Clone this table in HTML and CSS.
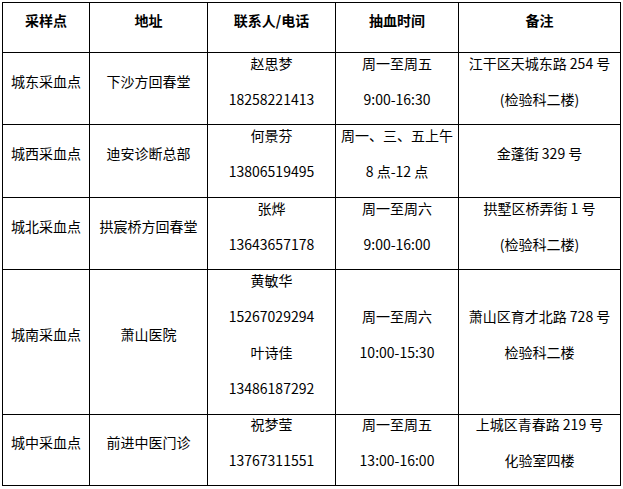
FILE: index.html
```html
<!DOCTYPE html>
<html lang="zh-CN">
<head>
<meta charset="utf-8">
<title>采血点</title>
<link rel="stylesheet" href="styles.css">
</head>
<body>
<table class="grid">
  <colgroup>
    <col class="c1"><col class="c2"><col class="c3"><col class="c4"><col class="c5">
  </colgroup>
  <thead>
    <tr class="rh">
      <th><p>采样点</p></th>
      <th><p>地址</p></th>
      <th><p>联系人/电话</p></th>
      <th><p>抽血时间</p></th>
      <th><p>备注</p></th>
    </tr>
  </thead>
  <tbody>
    <tr class="r1">
      <td><p>城东采血点</p></td>
      <td><p>下沙方回春堂</p></td>
      <td><p>赵思梦</p><p>18258221413</p></td>
      <td><p>周一至周五</p><p>9:00-16:30</p></td>
      <td><p>江干区天城东路 254 号</p><p>(检验科二楼)</p></td>
    </tr>
    <tr class="r2">
      <td><p>城西采血点</p></td>
      <td><p>迪安诊断总部</p></td>
      <td><p>何景芬</p><p>13806519495</p></td>
      <td><p>周一、三、五上午</p><p>8 点-12 点</p></td>
      <td><p>金蓬街 329 号</p></td>
    </tr>
    <tr class="r3">
      <td><p>城北采血点</p></td>
      <td><p>拱宸桥方回春堂</p></td>
      <td><p>张烨</p><p>13643657178</p></td>
      <td><p>周一至周六</p><p>9:00-16:00</p></td>
      <td><p>拱墅区桥弄街 1 号</p><p>(检验科二楼)</p></td>
    </tr>
    <tr class="r4">
      <td><p>城南采血点</p></td>
      <td><p>萧山医院</p></td>
      <td><p>黄敏华</p><p>15267029294</p><p>叶诗佳</p><p>13486187292</p></td>
      <td><p>周一至周六</p><p>10:00-15:30</p></td>
      <td><p>萧山区育才北路 728 号</p><p>检验科二楼</p></td>
    </tr>
    <tr class="r5">
      <td><p>城中采血点</p></td>
      <td><p>前进中医门诊</p></td>
      <td><p>祝梦莹</p><p>13767311551</p></td>
      <td><p>周一至周五</p><p>13:00-16:00</p></td>
      <td><p>上城区青春路 219 号</p><p>化验室四楼</p></td>
    </tr>
  </tbody>
</table>
</body>
</html>
```

FILE: styles.css
```css
html, body {
  background: #ffffff;
}
body {
  margin: 2px;
  font-family: "Noto Sans CJK SC", "Noto Sans", sans-serif;
  font-size: 14px;
  color: #000000;
}
.grid {
  border-collapse: collapse;
  table-layout: fixed;
  width: 618px;
}
.grid th,
.grid td {
  border: 1px solid #000000;
  padding: 0;
  text-align: center;
  vertical-align: middle;
  white-space: nowrap;
}
.grid th {
  font-weight: bold;
}
.grid p {
  margin: 0 0 18px 0;
  line-height: 18px;
}
.grid p:last-child {
  margin-bottom: 16px;
}
.c1 { width: 87px; }
.c2 { width: 118px; }
.c3 { width: 128px; }
.c4 { width: 123px; }
.c5 { width: 162px; }
.rh { height: 50px; }
.r1 { height: 72px; }
.r2 { height: 73px; }
.r3 { height: 72px; }
.r4 { height: 145px; }
.r5 { height: 71px; }
```
